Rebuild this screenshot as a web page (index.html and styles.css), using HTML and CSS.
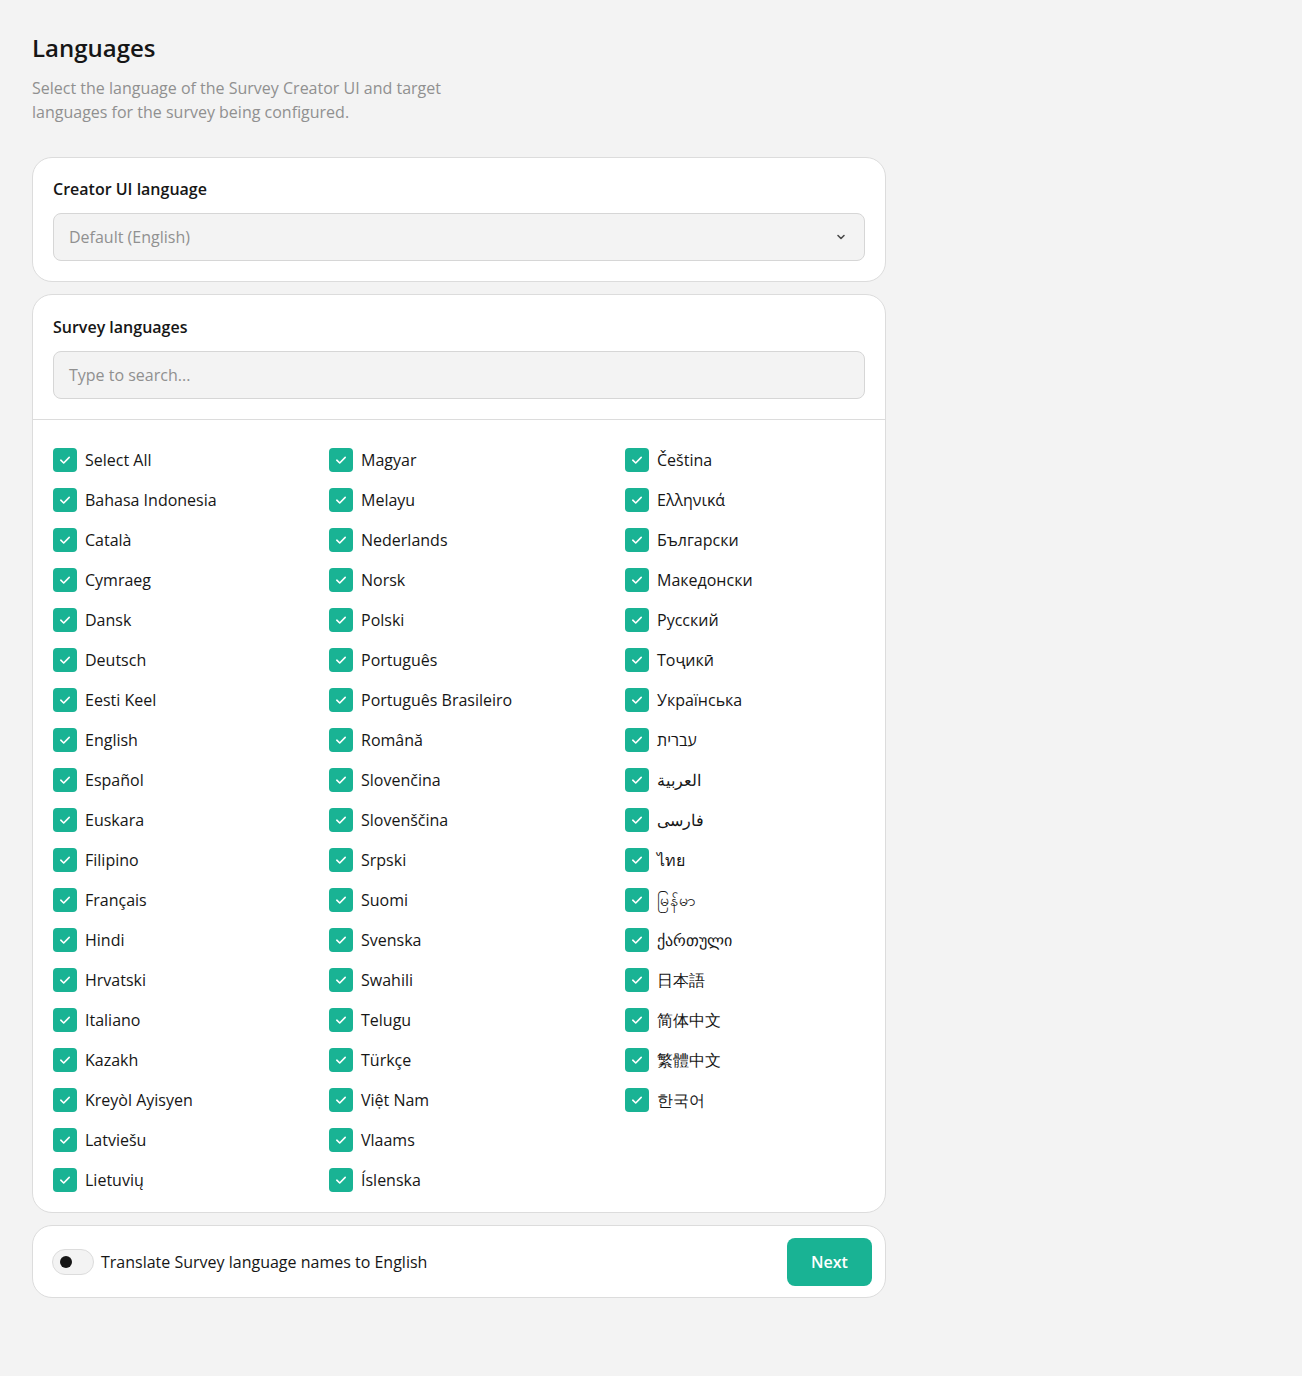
FILE: index.html
```html
<!DOCTYPE html>
<html lang="en">
<head>
<meta charset="utf-8">
<title>Languages</title>
<link rel="stylesheet" href="styles.css">
</head>
<body>
<main class="page">
  <h1 class="title">Languages</h1>
  <p class="subtitle">Select the language of the Survey Creator UI and target languages for the survey being configured.</p>

  <section class="card card-ui">
    <h2 class="card-title">Creator UI language</h2>
    <div class="select">
      <span>Default (English)</span>
      <svg class="chev" width="12" height="12" viewBox="0 0 12 12"><path d="M3 4.5 6 7.5 9 4.5" fill="none" stroke="#4a4a4a" stroke-width="1.6" stroke-linecap="round" stroke-linejoin="round"/></svg>
    </div>
  </section>

  <section class="card">
    <div class="search-wrap">
      <h2 class="card-title">Survey languages</h2>
      <div class="search">Type to search...</div>
    </div>
    <div class="list" id="list"></div>
  </section>

  <section class="card footer">
    <div class="toggle-row">
      <span class="toggle"><span class="knob"></span></span>
      <span class="toggle-label">Translate Survey language names to English</span>
    </div>
    <button class="next">Next</button>
  </section>
</main>
<script src="app.js"></script>
</body>
</html>
```

FILE: app.js
```js
var names = ["Select All","Bahasa Indonesia","Català","Cymraeg","Dansk","Deutsch","Eesti Keel","English","Español","Euskara","Filipino","Français","Hindi","Hrvatski","Italiano","Kazakh","Kreyòl Ayisyen","Latviešu","Lietuvių",
"Magyar","Melayu","Nederlands","Norsk","Polski","Português","Português Brasileiro","Română","Slovenčina","Slovenščina","Srpski","Suomi","Svenska","Swahili","Telugu","Türkçe","Việt Nam","Vlaams","Íslenska",
"Čeština","Ελληνικά","Български","Македонски","Русский","Тоҷикӣ","Українська","עברית","العربية","فارسی","ไทย","မြန်မာ","ქართული","日本語","简体中文","繁體中文","한국어"];
var list = document.getElementById("list");
var html = "";
names.forEach(function (n) {
  html += '<label class="item"><span class="box"><svg width="16" height="16" viewBox="0 0 16 16"><path d="M3.8 8.2 6.7 11 12.2 5.4" fill="none" stroke="#fff" stroke-width="1.6" stroke-linecap="round" stroke-linejoin="round"/></svg></span><span class="name">' + n + '</span></label>';
});
list.innerHTML = html;
```

FILE: styles.css
```css
* { box-sizing: border-box; }
html, body { margin: 0; padding: 0; }
body {
  background: #f3f3f3;
  font-family: "Open Sans", sans-serif;
  color: #161616;
}
.page {
  padding: 32px;
  width: 918px;
}
.title {
  margin: 0;
  font-size: 24px;
  line-height: 32px;
  font-weight: 600;
  color: #161616;
}
.subtitle {
  margin: 12px 0 0;
  font-size: 16px;
  line-height: 24px;
  color: #909090;
  max-width: 450px;
}
.card {
  background: #fff;
  border: 1px solid #dcdcdc;
  border-radius: 20px;
  margin-top: 12px;
}
.subtitle + .card { margin-top: 33px; }
.card-ui { padding: 19px 20px 20px; }
.card-title {
  margin: 0 0 12px;
  font-size: 16px;
  line-height: 24px;
  font-weight: 600;
}
.select, .search {
  height: 48px;
  background: #f3f3f3;
  border: 1px solid #d6d6d6;
  border-radius: 8px;
  padding: 0 15px;
  display: flex;
  align-items: center;
  justify-content: space-between;
  font-size: 16px;
  color: #909090;
}
.chev { margin-right: 2px; }
.search-wrap {
  padding: 20px;
  border-bottom: 1px solid #dcdcdc;
}
.list {
  padding: 20px 20px 12px;
  display: grid;
  grid-auto-flow: column;
  grid-template-rows: repeat(19, 40px);
  grid-template-columns: 276px 296px 1fr;
}
.item {
  display: flex;
  align-items: center;
  gap: 8px;
  font-size: 16px;
  line-height: 24px;
  color: #161616;
}
.box {
  width: 24px;
  height: 24px;
  border-radius: 4px;
  background: #19b394;
  display: flex;
  align-items: center;
  justify-content: center;
  flex: none;
}
.footer {
  display: flex;
  align-items: center;
  justify-content: space-between;
  padding: 12px 13px 11px 19px;
}
.toggle-row { display: flex; align-items: center; gap: 7px; }
.toggle {
  width: 42px;
  height: 26px;
  border: 1px solid #dcdcdc;
  background: #f3f3f3;
  border-radius: 13px;
  display: flex;
  align-items: center;
  padding-left: 7px;
}
.knob {
  width: 12px;
  height: 12px;
  border-radius: 50%;
  background: #161616;
}
.toggle-label { font-size: 16px; line-height: 24px; }
.next {
  height: 48px;
  width: 85px;
  border: none;
  border-radius: 8px;
  background: #19b394;
  color: #fff;
  font-family: inherit;
  font-size: 16px;
  font-weight: 600;
}
```
